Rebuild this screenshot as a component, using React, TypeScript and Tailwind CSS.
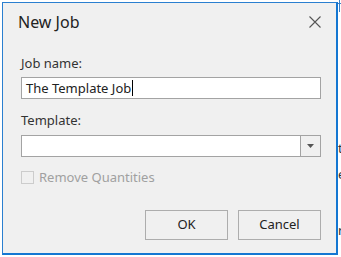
export default function App() {
  return (
    <div
      className="relative w-[341px] h-[257px] bg-white overflow-hidden"
      style={{ fontFamily: '"Noto Sans", "Open Sans", sans-serif' }}
    >
      {/* bits of the window behind the dialog */}
      <div className="absolute left-[337px] top-[3px] w-[4px] h-px bg-[#3c82c8]" />
      <div className="absolute left-[339px] top-0 w-px h-[12px] bg-[#3c82c8]" />
      <span className="absolute left-[338px] top-[142px] text-[13px] leading-none text-[#333]">t</span>
      <span className="absolute left-[338px] top-[168px] text-[13px] leading-none text-[#333]">e</span>
      <span className="absolute left-[338px] top-[224px] text-[13px] leading-none text-[#333]">r</span>

      <div className="absolute left-[2px] top-[2px] w-[336px] h-[253px] bg-[#f0f0f0] border border-[#2a7fd0] border-r-2 border-b-2 border-r-[#1477d2] border-b-[#1477d2] flex flex-col">
        <div className="flex items-center justify-between h-[36px] pl-[15px] pr-[14px]">
          <span className="text-[16px] text-[#222] leading-none mt-[2px]">New Job</span>
          <svg width="14" height="14" viewBox="0 0 14 14" className="mt-[1px]">
            <path d="M1.5 1.5 L12.5 12.5 M12.5 1.5 L1.5 12.5" stroke="#555" strokeWidth="1.1" />
          </svg>
        </div>

        <div className="flex flex-col pl-[18px] pr-[15px] pt-[16px]">
          <label className="text-[13px] text-[#333] leading-[16px]">Job name:</label>
          <div className="mt-[6px] h-[22px] bg-white border border-[#a3a3a3] flex items-center pl-[4px]">
            <span className="text-[13px] text-[#222] leading-none">The Template Job</span>
            <span className="w-px h-[16px] bg-black ml-px" />
          </div>

          <label className="mt-[13px] text-[13px] text-[#333] leading-[16px]">Template:</label>
          <div className="mt-[7px] h-[22px] bg-white border border-[#a3a3a3] flex">
            <div className="flex-1" />
            <div className="w-[20px] bg-[#f0f0f0] border-l border-[#a3a3a3] flex items-center justify-center">
              <svg width="7" height="4" viewBox="0 0 7 4">
                <path d="M0 0 H7 L3.5 4 Z" fill="#555" />
              </svg>
            </div>
          </div>

          <div className="mt-[14px] flex items-center gap-[5px]">
            <div className="w-[13px] h-[13px] border border-[#cccccc] bg-[#f0f0f0]" />
            <span className="text-[13px] text-[#a0a0a0] leading-none">Remove Quantities</span>
          </div>
        </div>

        <div className="mt-auto mb-[13px] flex justify-end gap-[10px] pr-[15px]">
          <button className="w-[83px] h-[30px] border border-[#adadad] bg-[#f0f0f0] text-[13px] text-[#222]">
            OK
          </button>
          <button className="w-[83px] h-[30px] border border-[#adadad] bg-[#f0f0f0] text-[13px] text-[#222]">
            Cancel
          </button>
        </div>
      </div>
    </div>
  );
}
